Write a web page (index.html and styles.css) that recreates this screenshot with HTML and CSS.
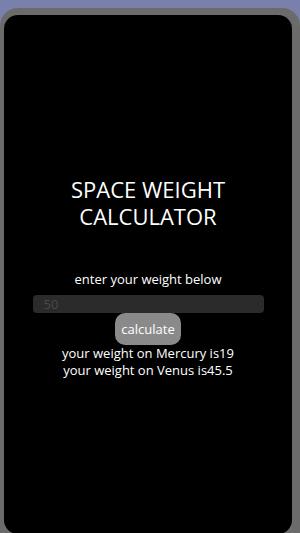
FILE: index.html
```html
<!DOCTYPE html>
<html lang="en">
<head>
    <meta charset="UTF-8">
    <meta name="viewport" content="width=device-width, initial-scale=1.0">
    <title>Space Weight Calculator</title>
    <link rel="stylesheet" href="styles.css">
</head>
<body>
    <div class="phone">
        <div class="screen">
            <h1 class="title">SPACE WEIGHT CALCULATOR</h1>
            <p class="prompt">enter your weight below</p>
            <input type="text" class="weight-input" id="weight" value="50">
            <button class="calc-button" id="calc">calculate</button>
            <div class="results">
                <p>your weight on Mercury is19</p>
                <p>your weight on Venus is45.5</p>
            </div>
        </div>
    </div>
</body>
</html>
```

FILE: styles.css
```css
/* Page */
body {
    margin: 0;
    background: #7880ab;
    font-family: "Open Sans", "Noto Sans", sans-serif;
    overflow: hidden;
}

/* Phone frame */
.phone {
    margin-top: 8px;
    height: 540px;
    background: #6b6b6b;
    border-radius: 18px 18px 0 0;
    padding: 7px 8px 0 4px;
}
.screen {
    height: 519px;
    box-sizing: border-box;
    padding-top: 161px;
    background: #000;
    border-radius: 14px;
    display: flex;
    flex-direction: column;
    align-items: center;
    color: #fff;
    text-align: center;
}

.title {
    font-size: 22px;
    font-weight: normal;
    line-height: 27px;
    margin: 0 0 40px;
    width: 170px;
}
.prompt {
    font-size: 13px;
    margin: 0 0 7px;
}
.weight-input {
    width: 231px;
    height: 18px;
    box-sizing: border-box;
    background: #2b2b2b;
    border: none;
    border-radius: 4px;
    color: #4a4a4a;
    font-family: inherit;
    font-size: 13px;
    padding: 0 11px;
}
.calc-button {
    background: #8a8a8a;
    color: #fff;
    border: none;
    border-radius: 10px;
    font-family: inherit;
    font-size: 13px;
    padding: 7px 6px;
}
.results p {
    margin: 0;
    font-size: 13px;
    line-height: 17px;
}
```
